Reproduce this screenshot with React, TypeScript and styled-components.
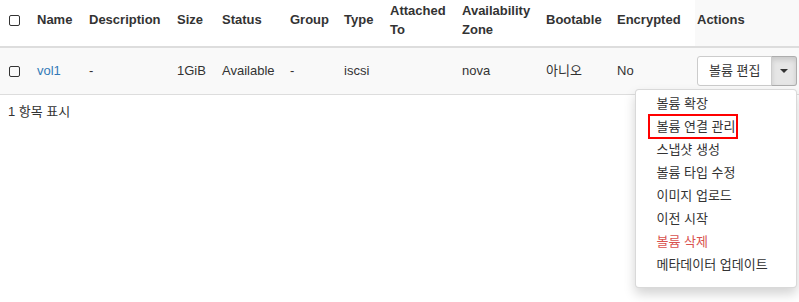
import React from "react"
import styled, { createGlobalStyle } from "styled-components"

const GlobalStyle = createGlobalStyle`
  body {
    margin: 0;
    background: #fff;
    color: #333;
    font-family: "Liberation Sans", "Noto Sans CJK KR", sans-serif;
    font-size: 13px;
    line-height: 1.42857;
  }
`

const Page = styled.div`
  width: 799px;
  height: 302px;
  overflow: hidden;
`

const Table = styled.table`
  width: 799px;
  table-layout: fixed;
  border-collapse: collapse;
  border-spacing: 0;
`

const HeadCell = styled.th<{ $shade?: boolean }>`
  padding: 2px 8px 7px;
  text-align: left;
  vertical-align: middle;
  font-weight: bold;
  border-bottom: 2px solid #ddd;
  background: ${(p) => (p.$shade ? "linear-gradient(to right, #fff 6px, #f9f9f9 6px)" : "transparent")};
`

const BodyRow = styled.tr`
  background: #f9f9f9;
`

const Cell = styled.td`
  padding: 8px;
  vertical-align: middle;
  border-bottom: 1px solid #ddd;
  white-space: nowrap;
`

const Check = styled.span`
  display: inline-block;
  width: 9px;
  height: 9px;
  border: 1px solid #333;
  border-radius: 2px;
  vertical-align: middle;
  margin-left: 1px;
`

const NameLink = styled.a`
  color: #337ab7;
  text-decoration: none;
`

const BtnGroup = styled.div`
  position: relative;
  display: inline-flex;
`

const Btn = styled.button`
  font-family: inherit;
  font-size: 13px;
  line-height: 18px;
  color: #333;
  background: #fff;
  border: 1px solid #ccc;
  border-radius: 3px 0 0 3px;
  padding: 5px 11px;
  height: 30px;
`

const CaretBtn = styled.button`
  width: 26px;
  height: 30px;
  background: #e6e6e6;
  border: 1px solid #adadad;
  border-left-color: #ccc;
  margin-left: -1px;
  border-radius: 0 3px 3px 0;
  display: flex;
  align-items: center;
  justify-content: center;
  padding: 0;
  box-shadow: inset 0 3px 5px rgba(0, 0, 0, 0.125);
`

const Caret = styled.span`
  width: 0;
  height: 0;
  border-top: 4px solid #333;
  border-left: 4px solid transparent;
  border-right: 4px solid transparent;
`

const Menu = styled.ul`
  position: absolute;
  top: calc(100% + 3px);
  right: 0;
  width: 160px;
  margin: 0;
  padding: 2px 0 11px;
  list-style: none;
  background: #fff;
  border: 1px solid rgba(0, 0, 0, 0.15);
  border-radius: 4px;
  box-shadow: 0 6px 12px rgba(0, 0, 0, 0.175);
  z-index: 10;
`

const MenuItem = styled.li<{ $danger?: boolean }>`
  padding: 3px 20px;
  line-height: 17px;
  white-space: nowrap;
  color: ${(p) => (p.$danger ? "#d9534f" : "#333")};
`

const Highlight = styled.span`
  display: inline-block;
  margin: -4px 0 -4px -8px;
  padding: 2px 1px 2px 6px;
  border: 2px solid #f00;
`

const Footer = styled.div`
  padding: 8px 8px;
`

const cols = [29, 52, 88, 45, 68, 54, 46, 72, 84, 71, 80, 110]

const menuItems = [
  "볼륨 확장",
  "볼륨 연결 관리",
  "스냅샷 생성",
  "볼륨 타입 수정",
  "이미지 업로드",
  "이전 시작",
  "볼륨 삭제",
  "메타데이터 업데이트",
]

export default function App() {
  return (
    <Page>
      <GlobalStyle />
      <Table>
        <colgroup>
          {cols.map((w, i) => (
            <col key={i} style={{ width: w }} />
          ))}
        </colgroup>
        <thead>
          <tr>
            <HeadCell>
              <Check />
            </HeadCell>
            <HeadCell>Name</HeadCell>
            <HeadCell>Description</HeadCell>
            <HeadCell>Size</HeadCell>
            <HeadCell>Status</HeadCell>
            <HeadCell>Group</HeadCell>
            <HeadCell>Type</HeadCell>
            <HeadCell>Attached To</HeadCell>
            <HeadCell>Availability Zone</HeadCell>
            <HeadCell>Bootable</HeadCell>
            <HeadCell>Encrypted</HeadCell>
            <HeadCell $shade>Actions</HeadCell>
          </tr>
        </thead>
        <tbody>
          <BodyRow>
            <Cell>
              <Check />
            </Cell>
            <Cell>
              <NameLink href="#">vol1</NameLink>
            </Cell>
            <Cell>-</Cell>
            <Cell>1GiB</Cell>
            <Cell>Available</Cell>
            <Cell>-</Cell>
            <Cell>iscsi</Cell>
            <Cell></Cell>
            <Cell>nova</Cell>
            <Cell>아니오</Cell>
            <Cell>No</Cell>
            <Cell>
              <BtnGroup>
                <Btn>볼륨 편집</Btn>
                <CaretBtn>
                  <Caret />
                </CaretBtn>
                <Menu>
                  {menuItems.map((m) => (
                    <MenuItem key={m} $danger={m === "볼륨 삭제"}>
                      {m === "볼륨 연결 관리" ? <Highlight>{m}</Highlight> : m}
                    </MenuItem>
                  ))}
                </Menu>
              </BtnGroup>
            </Cell>
          </BodyRow>
        </tbody>
      </Table>
      <Footer>1 항목 표시</Footer>
    </Page>
  )
}
